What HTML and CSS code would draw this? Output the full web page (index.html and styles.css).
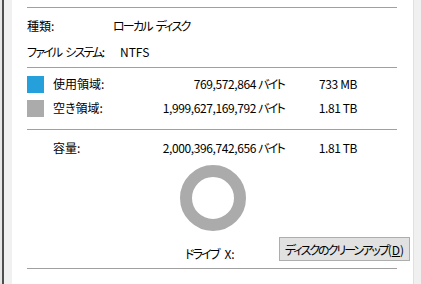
FILE: index.html
```html
<!DOCTYPE html>
<html lang="ja">
<head>
  <meta charset="UTF-8">
  <title>ローカル ディスク のプロパティ</title>
  <link rel="stylesheet" href="styles.css">
</head>
<body>
  <div class="frame">
    <div class="edge"></div>
    <div class="shade"></div>
    <div class="gutter"></div>

    <div class="panel">
      <div class="rule top"></div>

      <div class="info">
        <span>種類:</span>
        <span class="kana">ローカル ディスク</span>
        <span class="kana">ファイル システム:</span>
        <span class="fs">NTFS</span>
      </div>

      <div class="rule"></div>

      <div class="usage">
        <span class="swatch used"></span>
        <span>使用領域:</span>
        <span class="num">769,572,864 <span class="kana">バイト</span></span>
        <span class="num">733 MB</span>

        <span class="swatch free"></span>
        <span>空き領域:</span>
        <span class="num">1,999,627,169,792 <span class="kana">バイト</span></span>
        <span class="num">1.81 TB</span>
      </div>

      <div class="rule"></div>

      <div class="usage capacity">
        <span></span>
        <span>容量:</span>
        <span class="num">2,000,396,742,656 <span class="kana">バイト</span></span>
        <span class="num">1.81 TB</span>
      </div>

      <div class="donut"></div>

      <div class="drive">
        <span class="drive-label"><span class="kana">ドライブ</span> X:</span>
        <button class="cleanup"><span class="kana">ディスクのクリーンアップ</span>(<u>D</u>)</button>
      </div>

      <div class="rule"></div>
    </div>

    <div class="side"></div>
  </div>
</body>
</html>
```

FILE: styles.css
```css
html, body {
  margin: 0;
  padding: 0;
}
body {
  width: 421px;
  height: 284px;
  overflow: hidden;
  background-color: #f0f0f0;
  color: #000;
  font-family: 'Noto Sans CJK JP', sans-serif;
  font-size: 12px;
  font-feature-settings: 'palt';
}
.frame {
  display: flex;
  height: 284px;
}
.edge {
  width: 2px;
  background-color: #e6e6e6;
}
.shade {
  width: 2px;
  background-color: #4e4e4e;
}
.gutter {
  width: 8px;
  background-color: #f0f0f0;
}
.panel {
  flex: 1;
  background-color: #fff;
  border-right: 1px solid #e0e0e0;
}
.side {
  width: 7px;
  background-color: #f0f0f0;
}
.rule {
  height: 1px;
  background-color: #a0a0a0;
  margin: 0 16px 0 15px;
}
.rule.top {
  margin-top: 7px;
}
.kana {
  letter-spacing: -1.8px;
  word-spacing: 3px;
}
.info {
  display: grid;
  grid-template-columns: 86px auto;
  grid-auto-rows: 26px;
  align-items: center;
  padding: 5px 0 2px 15px;
  line-height: 14px;
  white-space: nowrap;
}
.info .fs {
  padding-left: 7px;
}
.usage {
  display: grid;
  grid-template-columns: 26px 100px 132px 72px;
  grid-auto-rows: 24px;
  align-items: center;
  padding: 4px 0 9px 15px;
  line-height: 14px;
}
.usage .num {
  text-align: right;
  white-space: nowrap;
  letter-spacing: -0.4px;
}
.usage .num .kana {
  letter-spacing: -1.8px;
  margin-right: 1px;
}
.swatch {
  width: 17px;
  height: 17px;
}
.swatch.used {
  background-color: #26a0da;
}
.swatch.free {
  background-color: #ababab;
}
.capacity {
  padding: 6px 0 0 15px;
}
.donut {
  width: 42px;
  height: 42px;
  margin: 5px auto 0;
  border: 12px solid #ababab;
  border-radius: 50%;
}
.drive {
  display: flex;
  margin-top: 6px;
  margin-bottom: 7px;
  padding: 0 3px 0 173px;
  height: 24px;
}
.drive-label {
  align-self: flex-end;
  line-height: 14px;
  white-space: nowrap;
  word-spacing: 3px;
}
.cleanup {
  margin-left: auto;
  width: 131px;
  height: 24px;
  padding: 0;
  background-color: #e1e1e1;
  border: 1px solid #adadad;
  font-family: inherit;
  font-size: 12px;
  font-feature-settings: 'palt';
  color: #000;
  white-space: nowrap;
}
.cleanup .kana {
  letter-spacing: -2px;
}
```
